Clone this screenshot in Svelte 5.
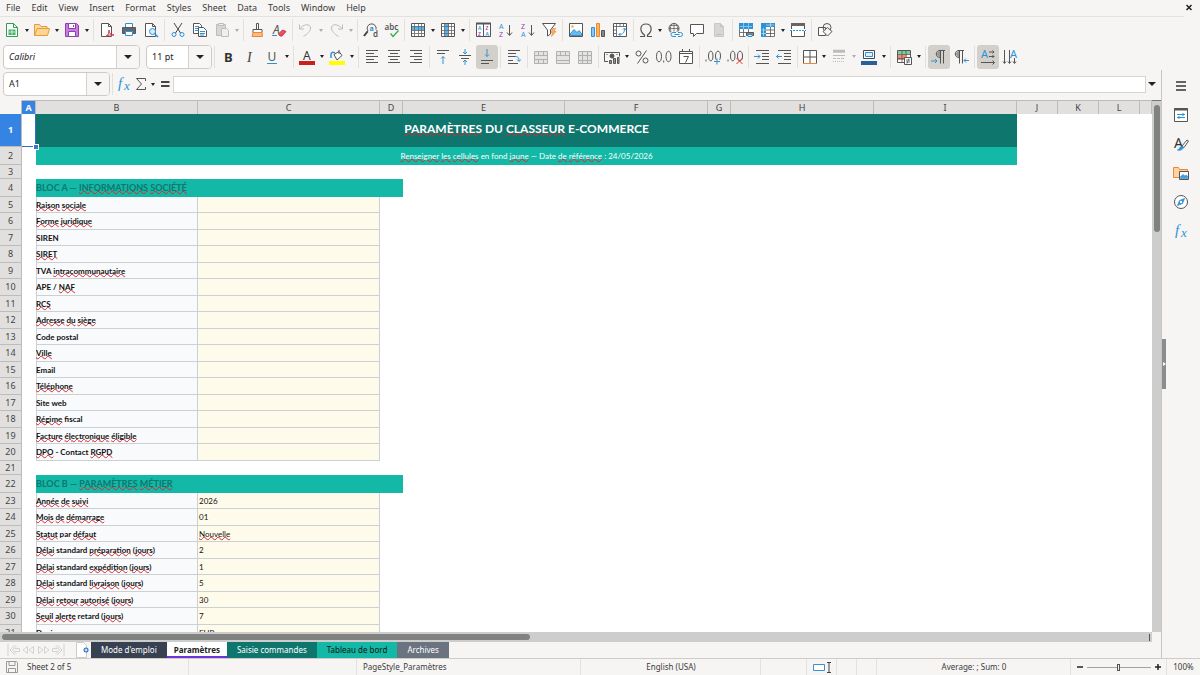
<script>
  const menus = ['File', 'Edit', 'View', 'Insert', 'Format', 'Styles', 'Sheet', 'Data', 'Tools', 'Window', 'Help'];

  const K = '#555';
  const B = '#2e92d6';
  const O = '#ed8733';
  const lines = (list) => `<path d="${list.map(([x, y, w]) => `M${x} ${y}h${w}`).join('')}"/>`;
  const letter = (t, x, y, size, fill, extra = '') =>
    `<text x="${x}" y="${y}" font-size="${size}" fill="${fill}" stroke="none" font-family="Noto Sans, sans-serif" ${extra}>${t}</text>`;
  const gridLines = '<path stroke-width=".8" stroke="#666" d="M1.5 4.5h13M1.5 8.5h13M1.5 11.5h13M4.5 1.5v13M8.5 1.5v13M11.5 1.5v13"/><path d="M1.5 1.5h13v13h-13z"/>';

  const icons = {
    new: `<path fill="#fff" stroke="#2f9e55" d="M2.5 1.5h7l4 4v9h-11z"/><path stroke="#2f9e55" d="M9.500 1.5v4h4"/><path fill="#4bb06c" stroke="none" d="M4.500 7.500h7v5.500h-7z"/><path stroke="#e4f8ea" stroke-width=".8" d="M5 10h6M8 8v4.500"/>`,
    open: `<path fill="#fbd9a0" stroke="#e59b3c" d="M.5 13.500v-11h5l1.500 2h6v2"/><path fill="#fcd794" stroke="#e59b3c" d="M.5 13.500l2.500-7h12.500l-2 7z"/>`,
    save: `<path fill="#c77fdb" stroke="#8e3fb0" d="M1.500 1.500h11l2 2v11h-13z"/><path fill="#fff" stroke="#8e3fb0" d="M4.500 1.500h7v5h-7zM4.500 9.500h7v5h-7z"/><path stroke="#8e3fb0" d="M9.500 3v2"/>`,
    pdf: `<path fill="#fff" d="M2.500 1.500h7l3 3v10h-10z"/><path d="M9.500 1.500v3h3"/><path fill="#fff" stroke="#d8323f" d="M6.500 14.500c3-1 3.500-4 3.500-6.500 0 3 2 5.500 5 5-3-.5-6.500 0-8.500 1.500z"/>`,
    print: `<path fill="#fff" stroke="${B}" d="M4.500 5.500v-4h7v4"/><path fill="#62676b" stroke="#55595d" d="M1.500 5.500h13v6h-13z"/><path fill="#fff" stroke="${B}" d="M4.500 9.500h7v4h-7z"/>`,
    preview: `<path fill="#fff" d="M2.500 1.500h7l3 3v10h-10z"/><path d="M9.500 1.500v3h3"/><circle cx="9.500" cy="9.500" r="3" fill="#d7ecfa" stroke="${B}"/><path stroke="${B}" stroke-width="1.500" d="M11.700 11.700l3.300 3.300"/>`,
    cut: `<path d="M4 1l6.500 10M12 1L5.500 11" stroke="#444"/><circle cx="4" cy="12.500" r="2" stroke="${B}"/><circle cx="12" cy="12.500" r="2" stroke="${B}"/>`,
    copy: `<path fill="#fff" d="M1.500 1.500h6l2 2v8h-8z"/><path stroke="${B}" d="M3 4.500h4M3 6.500h4M3 8.500h3"/><path fill="#fff" d="M6.500 5.500h5l3 3v6h-8z"/><path stroke="${B}" d="M8 9.500h5M8 11.500h5M8 13h4"/>`,
    paste: `<path fill="#ccc" stroke="#aaa" d="M2.500 2.500h9v11h-9z"/><path fill="#eee" stroke="#aaa" d="M4.500 1.500h5v2h-5zM7.500 6.500h5l2 2v6h-7z"/>`,
    brush: `<path d="M7.500 1.500h2v6h-2zM4 7.500h9v3H4z" fill="#fff"/><path fill="#f8bd82" stroke="${O}" d="M4 10.500h9l.5 4h-10.500z"/>`,
    clear: letter('A', 2, 11.5, 12, K, 'font-style="italic"') + `<path fill="#e8505a" stroke="#d23640" d="M7.500 12l4-4 3.500 1.500-4 4.500h-2z"/><path stroke="${B}" d="M1 13.500h5"/>`,
    undo: `<path stroke="#aaa" d="M1.500 7c5-6 11-5 11-1 0 3-3 6-7 8.500M1.500 2.500V7H6"/>`,
    redo: `<path stroke="#aaa" d="M14.500 7c-5-6-11-5-11-1 0 3 3 6 7 8.500M14.500 2.500V7H10"/>`,
    find: `<path d="M5 9a4.500 4.500 0 1 1 8-1.500M5 9l-4 4.500"/><path d="M4.500 9.500L1 14" stroke="#444" stroke-width="2"/>` + letter('a', 6.5, 8.5, 7, B, 'font-weight="700"') + letter('d', 10, 15, 8, K, 'font-weight="600"'),
    spell: letter('abc', 0.5, 7.5, 8, K, 'font-weight="600"') + `<path stroke="#2fa84f" stroke-width="1.200" d="M6.500 11.500l2.500 3 5.500-6"/>`,
    row: `<path fill="#fff" stroke="none" d="M1 1h14v14H1z"/><path fill="#58b4ec" stroke="none" d="M1 4h14v4.500H1z"/>` + gridLines,
    col: `<path fill="#fff" stroke="none" d="M1 1h14v14H1z"/><path fill="#58b4ec" stroke="none" d="M4.500 1H9v14H4.500z"/>` + gridLines,
    sort: `<path fill="#fff" d="M1.500 1.500h14v13h-14zM8.500 2v12"/><path d="M1 1.500h15" stroke-width="2"/>` + letter('A', 3, 8, 5, B, 'font-weight="600"') + letter('Z', 3, 14, 5, '#a838b8', 'font-weight="600"') + letter('Z', 10.5, 8, 5, '#a838b8', 'font-weight="600"') + letter('A', 10.5, 14, 5, B, 'font-weight="600"'),
    asc: letter('A', 2, 7, 7, B) + letter('Z', 2, 15, 7, '#a838b8') + '<path d="M12.500 3v10M10 10.500l2.500 3 2.500-3"/>',
    desc: letter('Z', 2, 7, 7, '#a838b8') + letter('A', 2, 15, 7, B) + '<path d="M12.500 3v10M10 10.500l2.500 3 2.500-3"/>',
    filter: `<path fill="#fff" d="M1.500 1.500h13L9.500 8v4l-3 2V8z"/><path fill="#f9b468" stroke="${O}" stroke-width=".6" d="M11.500 6.500h3l-1.500 3h2l-4.500 5 1-4h-1.500z"/>`,
    image: `<path fill="#fff" d="M1.500 1.500h13v13h-13z"/><path fill="#6fb8ea" stroke="${B}" d="M2.500 13.500v-2l3.500-4 3 3 2-2 2.500 3v2z"/><circle cx="4.500" cy="4.500" r="1.300" fill="#f9b04a" stroke="none"/>`,
    chart: `<path fill="#8cc8f0" stroke="${B}" d="M1.500 5.500h3v9h-3z"/><path fill="#f8b860" stroke="${O}" d="M6.500 1.500h3v13h-3z"/><path fill="#888" d="M11.500 8.500h3v6h-3z"/>`,
    pivot: `<path fill="#fff" d="M1.500 1.500h13v13h-13z"/><path stroke-width=".8" d="M1.500 4.500h13M4.500 1.500v13M8 1.500v3M11.500 1.500v3M1.500 8h3M1.500 11.500h3"/><path stroke="${B}" d="M7 12.500c4 0 5.500-2 5.500-6M11 7.500l1.500-1.500L14 8M8.500 11L7 12.500 8.500 14"/>`,
    omega: `<path stroke-width="1.200" d="M2 14.500h4.500v-1.500C1 9 2 2 8 2s7 7 1.500 11v1.500H14"/>`,
    link: `<circle cx="7" cy="6.500" r="5"/><path d="M2 6.500h10M7 1.500v10M3.500 3.500h7M4.500 2.500c-1.500 3-1.500 5 0 8M9.500 2.500c1.500 3 1.500 5 0 8" stroke-width=".7"/><path fill="#f6f5f4" stroke="none" d="M4 9.500h12v6H4z"/><path stroke="${B}" d="M9 10.500H6a2 2 0 0 0 0 4h3M11 10.500h2.500a2 2 0 0 1 0 4H11M7.500 12.500h5"/>`,
    comment: `<path fill="#fff" d="M1.500 2.500h13v9h-7l-3 3v-3h-3z"/>`,
    header: `<path fill="#ccc" stroke="#bbb" d="M3.500 1.500h6l3 3v10h-9z"/><path stroke="#b0b0b0" d="M5 12.500h6M9.500 1.500v3h3"/>`,
    printarea: `<path fill="#fff" stroke="none" d="M1 1h14v14H1z"/><path fill="${B}" stroke="none" d="M1 1h14v6H1z"/><path stroke="#9ccbea" stroke-width=".8" d="M2 4.500h12M5.500 1v6M10.500 1v6"/><path stroke-width=".8" d="M1.500 7v7.500h6M1.500 10.500h13M5.500 7v7.500M10.500 7v4"/><path fill="#888" d="M8.500 10.500h7v3h-7z"/><path fill="#fff" stroke="${B}" d="M10 12.500h4v2h-4z"/>`,
    freeze: `<path fill="#fff" stroke="none" d="M1 1h14v14H1z"/><path stroke-width=".8" d="M6 8h9M6 11.500h9M10.500 5v10M14.500 5v9.500H6"/><path fill="${B}" stroke="none" d="M1 1h14v4H6v10H1z"/><path stroke="#b5dbf3" stroke-width=".8" d="M3.500 6v8M6 3h8M1.500 8H6M1.500 11.500H6M10.500 1v4"/>`,
    split: `<path fill="#fff" d="M1.500 1.500h13v13h-13z"/><path stroke-width="3" stroke="#666" d="M1 2.500h14"/><path stroke="#fff" stroke-width="2" d="M1 8h14"/><path stroke="${B}" stroke-dasharray="2 1" d="M0 8.500h16"/>`,
    shapes: `<path d="M1.500 5.500h7v8h-7z" fill="#fff"/><circle cx="10" cy="5.500" r="4"/><path fill="#f6f5f4" d="M10.500 5.500l4.500 4-4.500 4.500L6 9.500z"/>`,
    bold: letter('B', 4, 13, 13, '#333', 'font-weight="700"'),
    italic: `<text x="5" y="13" font-size="14" font-style="italic" fill="#444" stroke="none" font-family="Liberation Serif, serif">I</text>`,
    underline: letter('U', 3.5, 12, 12, K) + `<path stroke="${B}" d="M3 14.500h10"/>`,
    fontcolor: letter('A', 4, 10.5, 12, '#333') + `<path stroke="#c9211e" stroke-width="4" d="M0 14h16"/>`,
    highlight: `<path fill="#fff" d="M5 5.500l5-3 3 4-5 4.500z"/><path d="M10 1v4"/><path stroke="${B}" stroke-width="1.500" d="M2 9V5.500C2 3 4 3 6 4"/><path stroke="#ffff00" stroke-width="4" d="M0 14h16"/>`,
    left: lines([[2, 1.5, 12], [2, 4.5, 8], [2, 7.5, 12], [2, 10.5, 8], [2, 13.5, 12]]),
    center: lines([[2, 1.5, 12], [4, 4.5, 8], [2, 7.5, 12], [4, 10.5, 8], [2, 13.5, 12]]),
    right: lines([[2, 1.5, 12], [6, 4.5, 8], [2, 7.5, 12], [6, 10.5, 8], [2, 13.5, 12]]),
    top: lines([[2, 1.5, 12], [2, 4.5, 8]]) + `<path stroke="${B}" d="M8 15V7.500M6 9.500l2-2 2 2"/>`,
    middle: lines([[2, 6.5, 12], [4, 9.5, 8]]) + `<path stroke="${B}" d="M8 0v5M6 3l2 2 2-2M8 16v-5M6 13l2-2 2 2"/>`,
    bottom: lines([[2, 11.5, 12], [2, 14.5, 8]]) + `<path stroke="${B}" d="M8 0v7.500M6 5.500l2 2 2-2"/>`,
    wrap: lines([[2, 1.5, 12], [2, 4.5, 8], [2, 7.5, 7], [2, 11.5, 5], [2, 14.5, 10]]) + `<path stroke="${B}" d="M9 7.500c3 0 4 1 4 4.500M11 10.500l2 2 2-2"/>`,
    merge: `<path fill="#ddd" stroke="#999" d="M1.500 2.500h13v12h-13zM1.500 6.500h13M1.500 10.500h13M5.500 2.500v4M10.500 2.500v4M5.500 10.500v4M10.500 10.500v4"/>`,
    mergecenter: `<path fill="#ddd" stroke="#999" d="M1.500 2.500h13v12h-13zM1.500 6.500h13M1.500 11.500h13M5.500 2.500v4M10.500 2.500v4"/>`,
    unmerge: `<path fill="#ddd" stroke="#999" d="M1.500 2.500h13v12h-13zM1.500 6.500h13M1.500 11.500h13M5.500 2.500v12M10.500 2.500v12"/>`,
    currency: `<path d="M4 12.500H.5v-9h15v4"/><circle cx="8" cy="7" r="2" fill="${K}"/><path d="M2.500 5.500h1M12.500 5.500h1"/><path fill="#999" d="M5.500 11.500h2v3h-2zM9.500 9.500h2v5h-2zM13.500 8.500h1.500v6h-1.500z"/>`,
    percent: `<circle cx="4.500" cy="4.500" r="2.500"/><circle cx="11.500" cy="11.500" r="2.500"/><path d="M12.500 1.500l-9 13"/>`,
    number: `<path d="M.5 7.500c0-7 5-7 5 0s-5 7-5 0zM10 7.500c0-7 5-7 5 0s-5 7-5 0zM7.700 11.500v2"/>`,
    date: `<path fill="#fff" d="M1.500 2.500h13v12h-13z"/><path d="M1.500 4.500h13M4.500 0v3M11.500 0v3"/><path d="M5.500 7.500h5l-3 6"/>`,
    adddec: `<path d="M3.500 7c0-6.500 4.500-6.500 4.500 0s-4.500 6.500-4.500 0zM10.500 7c0-6.500 5-6.500 5 0s-5 6.500-5 0zM1 10.500v2"/><path stroke="#f6f5f4" stroke-width="3" d="M9 12.500h7"/><path stroke="${B}" d="M9 12.500h6M12 9.500v6"/>`,
    deldec: `<path d="M3.500 7c0-6.500 4.500-6.500 4.500 0s-4.500 6.500-4.500 0zM10.500 7c0-6.500 5-6.500 5 0s-5 6.500-5 0zM1 10.500v2"/><path stroke="#e8322e" d="M9.500 9l6 6M15.500 9l-6 6"/>`,
    indent: lines([[2, 1.5, 13], [8, 4.5, 7], [8, 7.5, 7], [8, 10.5, 7], [2, 14.5, 13]]) + `<path stroke="${B}" d="M0 7.500h6M4 5.500l2 2-2 2"/>`,
    outdent: lines([[2, 1.5, 13], [8, 4.5, 7], [8, 7.5, 7], [8, 10.5, 7], [2, 14.5, 13]]) + `<path stroke="${B}" d="M6 7.500H.5M2.500 5.500l-2 2 2 2"/>`,
    borders: `<path fill="#fff" d="M1.500 14.500v-13h13v13"/><path d="M8 1.500v13M1.500 8h13"/><path stroke="${O}" d="M1 14.500h14"/>`,
    style: `<path stroke="#aaa" d="M2 1.500h12M2 3h12" stroke-width="1.500"/><path stroke="#aaa" d="M2 6.500h12"/><path stroke="#aaa" stroke-dasharray="3 1" d="M2 9.500h12"/><path stroke="#aaa" stroke-dasharray="1 1" d="M2 12.500h12"/>`,
    bordercolor: `<path fill="#fff" stroke="#45494d" d="M2.500 1.500h11v8h-11z"/><path fill="#e4eef6" stroke="${B}" d="M4.500 3.500h7v4h-7z"/><path stroke="#2a6099" stroke-width="4" d="M0 14h16"/>`,
    cond: `<path fill="#fff" d="M1.500 1.500h13v12h-13z"/><path fill="#7ccf94" stroke="none" d="M2 2h12v3H2z"/><path fill="#ee8a7c" stroke="none" d="M2 6h9v5H2z"/><path d="M1.500 5.500h13M1.500 9.500h8M6 1.500v12M10 1.500v5" stroke-width=".8"/><path fill="#fff" d="M8.500 8.500h7v7h-7z"/><path d="M10 11h4M10 13h4M13 9.500l-2 5" stroke-width=".8"/>`,
    ltr: `<path d="M8 1.500h6M9.500 1.500v13M12.500 1.500v13M9 8.500c-5 0-5-7 0-7"/><path fill="#999" stroke="none" d="M9 8c-4 0-4-6 0-6z"/><path stroke="${B}" d="M0 12h6M4 10l2 2-2 2"/>`,
    rtl: `<path d="M5 1.500h6M6.500 1.500v13M9.500 1.500v13M6 8.500c-5 0-5-7 0-7"/><path fill="#999" stroke="none" d="M6 8c-4 0-4-6 0-6z"/><path stroke="${B}" d="M16 11.500h-5M13 9.500l-2 2 2 2"/>`,
    horiz: letter('A', 1, 9, 11, B) + '<path d="M9 3h5M9 7.500h5M1 13.500h13M12.500 1.500L14 3l-1.500 1.500M12.500 6L14 7.500 12.500 9M12.500 11.500l2 2-2 2"/>',
    vert: letter('A', 8, 9, 11, B) + '<path d="M2.500 1v13M7.500 1v13M12.500 9v5M1 12.500l1.500 2 1.500-2M6 12.500l1.500 2 1.500-2M11 12.500l1.500 2 1.500-2"/>',
    fx: `<text x="2" y="12" font-size="15" font-style="italic" fill="${B}" stroke="none" font-family="Liberation Serif, serif">f</text><text x="8" y="14" font-size="13" font-style="italic" fill="${B}" stroke="none" font-family="Liberation Serif, serif">x</text>`,
    sigma: '<path d="M12.500 5V2.500h-9L8.500 8l-5 5.500h9V11"/>',
    equals: '<path stroke-width="2" stroke="#444" d="M4 6h8.500M4 10h8.500"/>',
    menu: '<path stroke-width="1.500" stroke="#333" d="M3 4h10M3 8h10M3 12h10"/>',
    properties: `<path fill="#fff" d="M1.500 1.500h13v13h-13z"/><path stroke-width="2" d="M1 2.500h14"/><path stroke="${B}" d="M4 7.500h8M4 10.500h8M10 6v3M6 9v3"/>`,
    styles: letter('A', 1, 12, 14, '#333') + `<path fill="#fff" d="M9 10l5-6 1.500 1-4.500 6.500z"/><path fill="${B}" stroke="${B}" d="M4.500 14c2 0 2-4 5-3.500 2 1.500-1 4.500-5 3.500z"/>`,
    gallery: `<path fill="#fbd3a0" stroke="${O}" d="M.5 12.500v-10h5l1 2h8v8z"/><path fill="#fff" d="M6.500 6.500h9v8h-9z"/><path fill="#4a9fd8" stroke="${B}" stroke-width=".6" d="M7.500 13.500v-2l2.500-2 2 1.500 1-1 1.500 1v2.500z"/>`,
    navigator: `<circle cx="8" cy="8" r="6.500" fill="#fff"/><path fill="${B}" stroke="${B}" stroke-width=".8" d="M11.500 4.500l-2 5-5 2 2-5z"/><circle cx="8" cy="8" r="1.200" fill="#fff" stroke="none"/>`,
    disk: `<path stroke="#999" d="M2.500 2.500h10l1 1v10h-11zM5 2.500v4h6v-4M4.500 13.500v-4h7v4"/>`,
    sheetadd: `<path fill="#fff" stroke="#ccc" d="M2.500.5h7l3 3v12h-10z"/><circle cx="12" cy="8" r="2.500" fill="#2a6fc0" stroke="none"/><path stroke="#fff" d="M10.500 8h3M12 6.500v3"/>`
  };

  const sep = { sep: true };
  const i = (icon, label, opt = {}) => ({ icon, label, ...opt });
  const caret = { caret: true };
  const off = { off: true };

  const standardBar = [
    i('new', 'New', caret), i('open', 'Open', caret), i('save', 'Save', caret), sep,
    i('pdf', 'Export as PDF'), i('print', 'Print'), i('preview', 'Print Preview'), sep,
    i('cut', 'Cut'), i('copy', 'Copy'), i('paste', 'Paste', { caret: true, off: true }), sep,
    i('brush', 'Clone Formatting'), i('clear', 'Clear Formatting'), sep,
    i('undo', 'Undo', { caret: true, off: true }), i('redo', 'Redo', { caret: true, off: true }), sep,
    i('find', 'Find and Replace'), i('spell', 'Spelling', { narrow: true }), sep,
    i('row', 'Row', caret), i('col', 'Column', caret), sep,
    i('sort', 'Sort'), i('asc', 'Sort Ascending'), i('desc', 'Sort Descending'), i('filter', 'AutoFilter'), sep,
    i('image', 'Image'), i('chart', 'Chart'), i('pivot', 'Pivot Table'), sep,
    i('omega', 'Special Character', { caret: true, narrow: true }), i('link', 'Hyperlink'), i('comment', 'Comment'), i('header', 'Headers and Footers', off), sep,
    i('printarea', 'Print Area'), i('freeze', 'Freeze Rows and Columns', caret), i('split', 'Split Window'), sep,
    i('shapes', 'Draw Functions')
  ];

  const formatBar = [
    i('bold', 'Bold'), i('italic', 'Italic'), i('underline', 'Underline', caret), sep,
    i('fontcolor', 'Font Color', caret), i('highlight', 'Background Color', caret), sep,
    i('left', 'Align Left'), i('center', 'Center'), i('right', 'Align Right'), sep,
    i('top', 'Align Top'), i('middle', 'Center Vertically'), i('bottom', 'Align Bottom', { on: true }), sep,
    i('wrap', 'Wrap Text'), sep,
    i('merge', 'Merge and Center', off), i('mergecenter', 'Merge Cells', off), i('unmerge', 'Unmerge Cells', off), sep,
    i('currency', 'Currency', caret), i('percent', 'Percent'), i('number', 'Number'), i('date', 'Date'), sep,
    i('adddec', 'Add Decimal Place'), i('deldec', 'Delete Decimal Place'), sep,
    i('indent', 'Increase Indent'), i('outdent', 'Decrease Indent'), sep,
    i('borders', 'Borders', { caret: true, narrow: true }), i('style', 'Border Style', { caret: true, off: true }), i('bordercolor', 'Border Color', caret), sep,
    i('cond', 'Conditional Formatting', caret), sep,
    i('ltr', 'Left-To-Right', { on: true }), i('rtl', 'Right-To-Left'), sep,
    i('horiz', 'Text direction from left to right', { on: true }), i('vert', 'Text direction from top to bottom')
  ];

  const columns = [
    ['A', 14], ['B', 162], ['C', 182], ['D', 23], ['E', 162], ['F', 143],
    ['G', 23], ['H', 143], ['I', 143], ['J', 41], ['K', 41], ['L', 41]
  ];

  // Words between asterisks are flagged by the spell checker.
  const labels = {
    5: ['*Raison* *sociale*'], 6: ['*Forme* *juridique*'], 7: ['SIREN'], 8: ['*SIRET*'],
    9: ['TVA *intracommunautaire*'], 10: ['APE / *NAF*'], 11: ['*RCS*'], 12: ['*Adresse* *du* *siège*'],
    13: ['Code postal'], 14: ['*Ville*'], 15: ['Email'], 16: ['*Téléphone*'], 17: ['Site web'],
    18: ['*Régime* fiscal'], 19: ['*Facture* *électronique* *éligible*'], 20: ['*DPO* - Contact *RGPD*'],
    23: ['*Année* *de* *suivi*', '2026'], 24: ['*Mois* *de* *démarrage*', '01'],
    25: ['*Statut* par *défaut*', '*Nouvelle*'], 26: ['*Délai* standard *préparation* (*jours*)', '2'],
    27: ['*Délai* standard *expédition* (*jours*)', '1'], 28: ['*Délai* standard *livraison* (*jours*)', '5'],
    29: ['*Délai* *retour* *autorisé* (*jours*)', '30'], 30: ['*Seuil* *alerte* retard (*jours*)', '7'],
    31: ['*Devise*', 'EUR']
  };
  const special = {
    1: { kind: 'title', h: 33, text: '*PARAMÈTRES* DU *CLASSEUR* E-COMMERCE' },
    2: { kind: 'subtitle', h: 18, text: '*Renseigner* *les* *cellules* en fond *jaune* — Date *de* *référence* : 24/05/2026' },
    3: { kind: 'gap', h: 14 },
    4: { kind: 'block', h: 18, text: 'BLOC A — *INFORMATIONS* *SOCIÉTÉ*' },
    21: { kind: 'gap', h: 14 },
    22: { kind: 'block', h: 18, text: 'BLOC B — *PARAMÈTRES* *MÉTIER*' }
  };
  const rows = Array.from({ length: 31 }, (_, k) => {
    const n = k + 1;
    return special[n] ? { n, ...special[n] } : { n, kind: 'field', h: n % 2 ? 16 : 17, text: labels[n][0], value: labels[n][1] ?? '' };
  });

  const tabs = [
    { name: "Mode d'emploi", tone: 'slate' }, { name: 'Paramètres', tone: 'current' },
    { name: 'Saisie commandes', tone: 'teal' }, { name: 'Tableau de bord', tone: 'mint' }, { name: 'Archives', tone: 'gray' }
  ];

  const panels = [
    ['menu', 'Sidebar Settings'], ['properties', 'Properties'], ['styles', 'Styles'],
    ['gallery', 'Gallery'], ['navigator', 'Navigator'], ['fx', 'Functions']
  ];
</script>

{#snippet glyph(name)}
  <svg class="glyph" viewBox="0 0 16 16" fill="none" stroke={K} aria-hidden="true">{@html icons[name]}</svg>
{/snippet}

{#snippet spelled(text)}{#each text.split('*') as part, k}{#if k % 2}<span class="flag">{part}</span>{:else}{part}{/if}{/each}{/snippet}

{#snippet tools(items)}
  {#each items as t}
    {#if t.sep}
      <span class="sep"></span>
    {:else}
      <button class="tool" class:on={t.on} class:off={t.off} class:narrow={t.narrow} aria-label={t.label}>{@render glyph(t.icon)}</button>
      {#if t.caret}<button class="drop" class:off={t.off} aria-label="{t.label} options"></button>{/if}
    {/if}
  {/each}
{/snippet}

<div class="app">
  <header>
    <nav class="menubar">
      {#each menus as m}<button>{m}</button>{/each}
      <button class="close" aria-label="Close document">
        <svg viewBox="0 0 8 8" width="8" height="8" stroke="#222" stroke-width="1.500"><path d="M1.500 2l5 5M6.500 2l-5 5" /></svg>
      </button>
    </nav>
    <div class="toolbar standard">{@render tools(standardBar)}</div>
    <div class="toolbar format">
      <div class="combo font"><input aria-label="Font Name" value="Calibri" /><button aria-label="Font list"></button></div>
      <div class="combo size"><input aria-label="Font Size" value="11 pt" /><button aria-label="Size list"></button></div>
      <span class="sep"></span>
      {@render tools(formatBar)}
    </div>
  </header>

  <div class="body">
    <main>
      <div class="formula">
        <div class="combo name"><input aria-label="Name Box" value="A1" /><button aria-label="Named ranges"></button></div>
        <span class="sep"></span>
        <button class="tool wizard" aria-label="Function Wizard">{@render glyph('fx')}</button>
        <button class="tool sum" aria-label="Select Function">{@render glyph('sigma')}</button>
        <button class="drop" aria-label="Function options"></button>
        <button class="tool sum" aria-label="Formula">{@render glyph('equals')}</button>
        <input class="line" aria-label="Input line" />
        <button class="expand" aria-label="Expand Formula Bar"></button>
      </div>

      <div class="gridarea">
        <div class="viewport">
          <table>
            <colgroup>
              <col class="rowhead" />
              {#each columns as [, w]}<col style="width: {w}px" />{/each}
              <col />
            </colgroup>
            <thead>
              <tr>
                <th class="corner"></th>
                {#each columns as [name]}<th scope="col" class:selected={name === 'A'}>{name}</th>{/each}
                <th></th>
              </tr>
            </thead>
            <tbody>
              {#each rows as r}
                <tr style="height: {r.h}px">
                  <th scope="row" class:selected={r.n === 1}>{r.n}</th>
                  <td class:active={r.n === 1}></td>
                  {#if r.kind === 'title' || r.kind === 'subtitle'}
                    <td class={r.kind} colspan="8">{@render spelled(r.text)}</td>
                    <td colspan="4"></td>
                  {:else if r.kind === 'block'}
                    <td class="block" colspan="3">{@render spelled(r.text)}</td>
                    <td colspan="9"></td>
                  {:else if r.kind === 'field'}
                    <td class="label">{@render spelled(r.text)}</td>
                    <td class="value">{@render spelled(r.value)}</td>
                    <td colspan="10"></td>
                  {:else}
                    <td colspan="12"></td>
                  {/if}
                </tr>
              {/each}
            </tbody>
          </table>
        </div>
        <div class="vscroll"><span></span></div>
      </div>
      <div class="hscroll"><span></span><i></i></div>

      <div class="tabs">
        <div class="tabnav">
          <button aria-label="First sheet"><svg viewBox="0 0 14 12"><path d="M1.500 0v12M3.500 6l5-5M3.500 6l5 5M6 6l4-4M6 6l4 4M8 4.500h5v3H8" /></svg></button>
          <button aria-label="Previous sheet"><svg viewBox="0 0 14 12"><path d="M6 2.500L1.500 6 6 9.500zM12 2.500L7.500 6l4.500 3.500z" /></svg></button>
          <button aria-label="Next sheet"><svg viewBox="0 0 14 12"><path d="M2 2.500L6.500 6 2 9.500zM8 2.500L12.500 6 8 9.500z" /></svg></button>
          <button aria-label="Last sheet"><svg viewBox="0 0 14 12"><path d="M12.500 0v12M10.500 6l-5-5M10.500 6l-5 5M8 6L4 2M8 6l-4 4M6 4.500H1v3h5" /></svg></button>
        </div>
        <button class="addsheet" aria-label="Add sheet">{@render glyph('sheetadd')}</button>
        {#each tabs as t}<button class="tab {t.tone}">{t.name}</button>{/each}
      </div>
    </main>

    <aside>
      <button class="splitter" aria-label="Hide sidebar"></button>
      <div class="panels">
        {#each panels as [icon, label]}<button aria-label={label}>{@render glyph(icon)}</button>{/each}
      </div>
    </aside>
  </div>

  <footer>
    <div class="cell sheetno">{@render glyph('disk')}<span>Sheet 2 of 5</span></div>
    <div class="cell"></div>
    <div class="cell page">PageStyle_Paramètres</div>
    <div class="cell mid">English (USA)</div>
    <div class="cell"></div>
    <div class="cell mid">
      <svg width="20" height="12" viewBox="0 0 20 12" fill="none"><path stroke="#3d8fd0" fill="#fff" d="M1.500 3.500h11v6h-11z" /><path stroke="#444" d="M15 1.500h4M15 11.500h4M17 1.500v10" /></svg>
    </div>
    <div class="cell"></div>
    <div class="cell"></div>
    <div class="cell mid">Average: ; Sum: 0</div>
    <div class="cell zoom">
      <button aria-label="Zoom Out"><svg viewBox="0 0 8 8"><path d="M1 4h6" /></svg></button>
      <input type="range" min="0" max="100" value="49" aria-label="Zoom" />
      <button aria-label="Zoom In"><svg viewBox="0 0 8 8"><path d="M1 4h6M4 1v6" /></svg></button>
    </div>
    <div class="cell percent">100%</div>
  </footer>
</div>

<style>
  :global(body) { margin: 0; }
  .app {
    display: flex; flex-direction: column; height: 100vh; overflow: hidden;
    background: #f6f5f4; color: #3b3b3b; font: 9px/12px "Noto Sans", sans-serif;
  }
  button, input { font: inherit; color: inherit; border: 0; background: none; padding: 0; margin: 0; }
  .glyph { width: 16px; height: 16px; display: block; flex: none; overflow: visible; }

  .menubar { display: flex; height: 16px; align-items: center; border-bottom: 1px solid #e4e2df; margin-right: 16px; }
  .menubar button { padding: 0 5px 0 6px; }
  .menubar .close { margin-left: auto; margin-right: -16px; padding: 0 7px 0 0; }

  .toolbar { display: flex; align-items: center; height: 26px; padding-left: 1px; }
  .toolbar.format { height: 27px; padding-left: 3px; }
  .tool { width: 22px; height: 24px; display: flex; align-items: center; justify-content: center; border-radius: 3px; flex: none; }
  .tool.narrow { width: 20px; }
  .tool.on { background: #d3d0cc; }
  .tool.off { opacity: .75; }
  .drop { width: 8px; height: 24px; display: flex; align-items: center; justify-content: center; flex: none; }
  .drop::before, .combo button::before, .expand::before {
    content: ""; border: 2px solid transparent; border-top: 3px solid #222; border-bottom: 0;
  }
  .drop.off::before { border-top-color: #b0aeab; }
  .sep { width: 1px; height: 22px; margin: 0 2px; background: #e2dfdc; flex: none; }

  .combo { display: flex; height: 22px; border: 1px solid #cfcac5; border-radius: 4px; background: #fff; overflow: hidden; flex: none; }
  .combo input { flex: 1; min-width: 0; padding-left: 5px; color: #222; outline: 0; }
  .combo button { width: 23px; border-left: 1px solid #d5d0cc; background: #f7f6f5; display: flex; align-items: center; justify-content: center; }
  .combo button::before, .expand::before { border-width: 4px 4px 0; }
  .combo.font { width: 135px; margin-right: 6px; }
  .combo.font input { font-style: italic; }
  .combo.size { width: 64px; }
  .combo.name { width: 105px; }

  .body { flex: 1; min-height: 0; display: flex; }
  main { flex: 1; min-width: 0; display: flex; flex-direction: column; }
  .formula { display: flex; align-items: center; height: 30px; padding: 0 3px 2px; flex: none; box-sizing: border-box; }
  .formula .tool.wizard { width: 18px; }
  .formula .tool.sum { width: 16px; }
  .line { flex: 1; min-width: 0; height: 17px; box-sizing: border-box; border: 1px solid #d8d4d0; background: #fff; outline: 0; }
  .expand { width: 12px; display: flex; justify-content: center; }

  .gridarea { flex: 1; min-height: 0; display: flex; }
  .viewport { flex: 1; min-width: 0; overflow: hidden; background: #fff; }
  table { table-layout: fixed; width: 100%; border-collapse: separate; border-spacing: 0; }
  .rowhead { width: 22px; }
  th, td { padding: 0; box-sizing: border-box; white-space: nowrap; overflow: hidden; line-height: 12px; }
  th { background: #e1e0df; font-weight: 400; font-size: 9px; border-right: 1px solid #bdbcba; border-bottom: 1px solid #bdbcba; color: #444; }
  thead tr { height: 14px; }
  thead th { border-top: 1px solid #bdbcba; border-bottom: 0; }
  .corner { background: #f6f5f4; border-top-color: #f6f5f4; }
  th.selected { background: #3584e4; color: #fff; font-weight: 700; }
  td { font-family: Lato, sans-serif; font-size: 8px; color: #111; }
  .title { background: #0f766e; color: #fff; font-size: 12px; line-height: 16px; font-weight: 700; text-align: center; padding-bottom: 3px; }
  .subtitle { background: #14b8a6; color: #fff; text-align: center; }
  .block { background: #14b8a6; color: #0f766e; font-size: 9px; font-weight: 700; }
  .label { background: #f8fafc; font-weight: 700; border: solid #cbd0d5; border-width: 0 1px 1px 0; box-shadow: inset 1px 0 #cbd0d5; }
  .value { background: #fffbeb; padding-left: 1px; border: solid #cbd0d5; border-width: 0 1px 1px 0; }
  .flag { text-decoration: underline wavy #d8262c 1px; text-decoration-skip-ink: none; text-underline-offset: -1px; }
  .active { position: relative; overflow: visible; border: solid #2f6fc4; border-width: 0 1px 1px 0; }
  .active::after { content: ""; position: absolute; right: -3px; bottom: -3px; width: 4px; height: 4px; background: #3a78c9; outline: 1px solid #fff; z-index: 1; }

  .vscroll { width: 9px; background: #cdcdcd; display: flex; justify-content: center; flex: none; border-top: 1px solid #777; box-sizing: border-box; }
  .vscroll span { width: 6px; height: 24%; margin-top: 4px; border-radius: 3px; background: #808280; }
  .hscroll { height: 10px; margin-right: 9px; background: #cdcdcd; display: flex; align-items: center; justify-content: space-between; padding: 0 2px; flex: none; }
  .hscroll span { width: 46%; height: 6px; border-radius: 3px; background: #808280; }
  .hscroll i { width: 1px; height: 7px; background: #555; }

  .tabs { display: flex; height: 16px; flex: none; font-size: 8px; }
  .tabnav { display: flex; align-items: center; padding: 0 6px; }
  .tabnav button { width: 15px; display: flex; }
  .tabnav svg { width: 15px; height: 12px; fill: none; stroke: #cbc9c6; stroke-width: .8; }
  .addsheet { width: 19px; display: flex; justify-content: center; }
  .tab { padding: 0 10px; color: #fff; }
  .slate { background: #374151; }
  .current { background: #fff; color: #222; font-weight: 700; padding: 0 7px; box-shadow: inset 0 -2px #6d35d9; }
  .teal { background: #0f766e; }
  .mint { background: #14b8a6; color: #111; }
  .gray { background: #6b7280; }

  aside { display: flex; align-items: center; width: 38px; border-left: 1px solid #c9c6c2; flex: none; }
  .splitter { width: 4px; height: 50px; background: #8c8c8c; display: flex; align-items: center; justify-content: center; }
  .splitter::before { content: ""; border: solid transparent; border-width: 2px 0 2px 3px; border-left-color: #fff; }
  .panels { flex: 1; align-self: stretch; display: flex; flex-direction: column; align-items: center; gap: 13px; padding: 8px 4px 0 0; }

  footer {
    display: grid; height: 16px; flex: none; border-top: 1px solid #cfccc8; font-size: 8px;
    grid-template-columns: 189fr 168fr 224fr 180fr 46fr 30fr 20fr 20fr 194fr 96fr 33fr;
  }
  .cell { display: flex; align-items: center; min-width: 0; white-space: nowrap; box-shadow: inset -1px 0 #e4e1de; }
  .cell.mid { justify-content: center; }
  .sheetno { padding-left: 4px; gap: 7px; }
  .page { padding-left: 6px; }
  .zoom { justify-content: center; gap: 3px; }
  .zoom button, .zoom svg { width: 8px; height: 8px; display: block; }
  .zoom svg { stroke: #222; stroke-width: 1.5; }
  .zoom input { appearance: none; flex: 0 1 64px; min-width: 0; height: 8px; background: linear-gradient(#a5a3a0, #a5a3a0) center / 100% 1px no-repeat; }
  .zoom input::-webkit-slider-thumb { appearance: none; width: 3px; height: 7px; background: #eee; border: 1px solid #555; box-sizing: border-box; }
  .percent { justify-content: center; box-shadow: none; }
</style>
